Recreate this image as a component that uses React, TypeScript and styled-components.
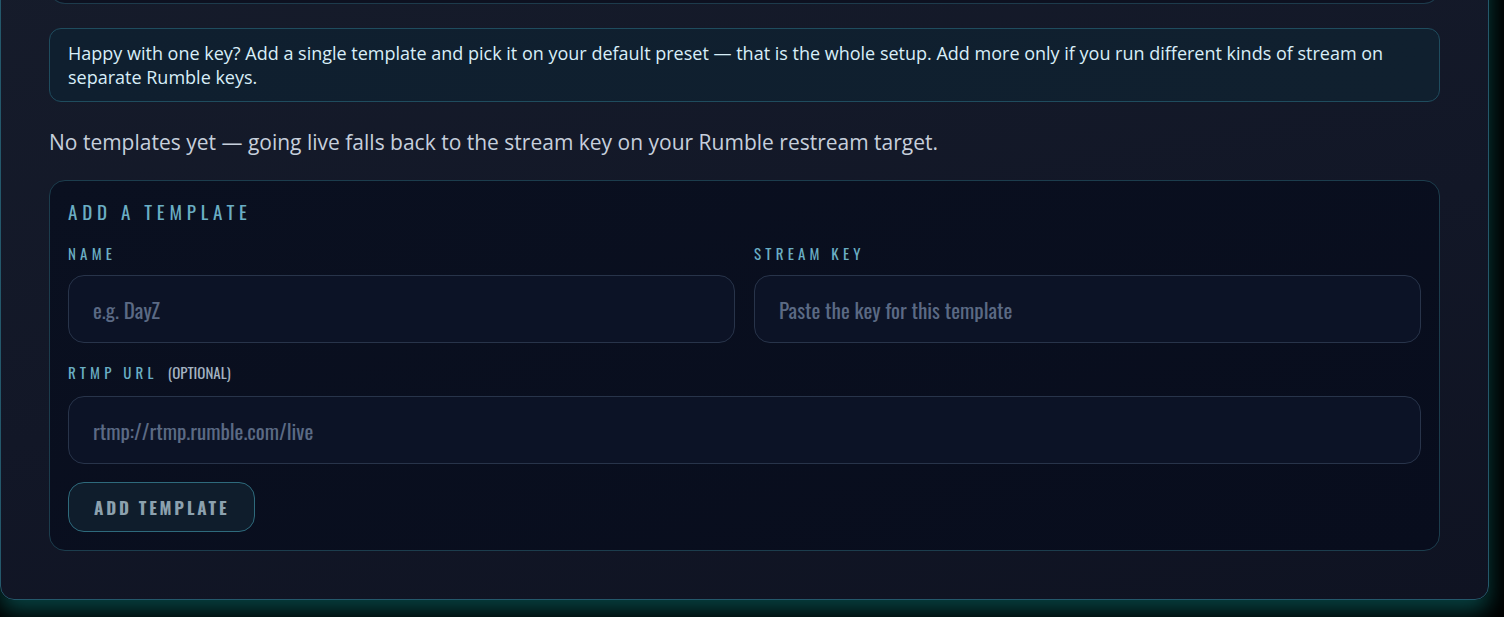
import React from 'react';
import styled, { createGlobalStyle } from 'styled-components';

const GlobalStyle = createGlobalStyle`
  html {
    overflow: hidden;
    background: #000;
  }
  body {
    margin: 0;
    padding: 0;
    background: #000;
    font-family: "Open Sans", "Noto Sans", sans-serif;
  }
  * {
    box-sizing: border-box;
  }
`;

const condensed = `"Oswald", "Liberation Sans Narrow", "Arial Narrow", "DejaVu Sans Condensed", sans-serif`;

const Page = styled.div`
  display: flex;
  flex-direction: column;
  align-items: flex-start;
  height: 617px;
  background: #000;
`;

const Panel = styled.section`
  width: 1489px;
  margin-top: -63px;
  padding: 0 48px 48px;
  border: 1px solid #24586b;
  border-radius: 0 0 14px 14px;
  background: linear-gradient(170deg, #161c2b 0%, #121727 55%, #0f1322 100%);
  box-shadow: 0 12px 22px rgba(16, 150, 150, 0.42);
  display: flex;
  flex-direction: column;
`;

const PrevCard = styled.div`
  height: 66px;
  border: 1px solid #1d3b4c;
  border-top: none;
  border-radius: 0 0 16px 16px;
  background: #0d1120;
`;

const InfoBox = styled.div`
  margin-top: 24px;
  padding: 12px 18px;
  border: 1px solid #1f4c5e;
  border-radius: 12px;
  background: linear-gradient(90deg, #0f1f2f 0%, #10202f 100%);
  color: #d8eef8;
  font-size: 18px;
  line-height: 24px;
`;

const EmptyNote = styled.p`
  margin: 25px 0 23px;
  color: #c6cfdc;
  font-size: 21px;
  line-height: 30px;
`;

const Card = styled.div`
  padding: 18px;
  border: 1px solid #1c3d4d;
  border-radius: 16px;
  background: linear-gradient(160deg, #0a1020 0%, #080d1d 100%);
`;

const Title = styled.h3`
  margin: 0 0 21px;
  font-family: ${condensed};
  font-weight: 400;
  font-size: 19px;
  line-height: 24px;
  letter-spacing: 4.8px;
  color: #6aaec4;
  text-transform: uppercase;
`;

const Grid = styled.div`
  display: grid;
  grid-template-columns: 1fr 1fr;
  column-gap: 19px;
  row-gap: 20px;
`;

const Field = styled.label<{ $wide?: boolean }>`
  display: flex;
  flex-direction: column;
  gap: ${(p) => (p.$wide ? '15px' : '13px')};
  grid-column: ${(p) => (p.$wide ? '1 / -1' : 'auto')};
`;

const LabelRow = styled.span`
  display: flex;
  align-items: baseline;
  gap: 10px;
  height: 18px;
  line-height: 18px;
`;

const LabelText = styled.span`
  font-family: ${condensed};
  font-size: 15px;
  letter-spacing: 4.2px;
  color: #6aaec4;
  text-transform: uppercase;
`;

const Optional = styled.span`
  font-family: ${condensed};
  font-size: 15px;
  color: #a4b3c2;
`;

const Input = styled.input`
  height: 68px;
  width: 100%;
  padding: 0 24px;
  border: 1px solid #28344a;
  border-radius: 16px;
  background: #0c1326;
  color: #c6cfdc;
  font-family: ${condensed};
  font-size: 21px;
  outline: none;

  &::placeholder {
    color: #5b6a84;
  }
`;

const AddButton = styled.button`
  margin-top: 18px;
  height: 50px;
  padding: 0 25px;
  border: 1px solid #2e6a7c;
  border-radius: 16px;
  background: #0f1d2c;
  color: #8ca1ae;
  font-family: ${condensed};
  font-weight: 700;
  font-size: 17px;
  letter-spacing: 2.8px;
  text-transform: uppercase;
  cursor: pointer;
`;

export default function App() {
  return (
    <Page>
      <GlobalStyle />
      <Panel>
        <PrevCard />
        <InfoBox>
          Happy with one key? Add a single template and pick it on your default preset — that is the whole setup. Add more only if you run different kinds of stream on separate Rumble keys.
        </InfoBox>
        <EmptyNote>
          No templates yet — going live falls back to the stream key on your Rumble restream target.
        </EmptyNote>
        <Card>
          <Title>Add a template</Title>
          <Grid>
            <Field>
              <LabelRow>
                <LabelText>Name</LabelText>
              </LabelRow>
              <Input placeholder="e.g. DayZ" />
            </Field>
            <Field>
              <LabelRow>
                <LabelText>Stream key</LabelText>
              </LabelRow>
              <Input placeholder="Paste the key for this template" />
            </Field>
            <Field $wide>
              <LabelRow>
                <LabelText>RTMP URL</LabelText>
                <Optional>(OPTIONAL)</Optional>
              </LabelRow>
              <Input placeholder="rtmp://rtmp.rumble.com/live" />
            </Field>
          </Grid>
          <AddButton type="button">Add template</AddButton>
        </Card>
      </Panel>
    </Page>
  );
}
